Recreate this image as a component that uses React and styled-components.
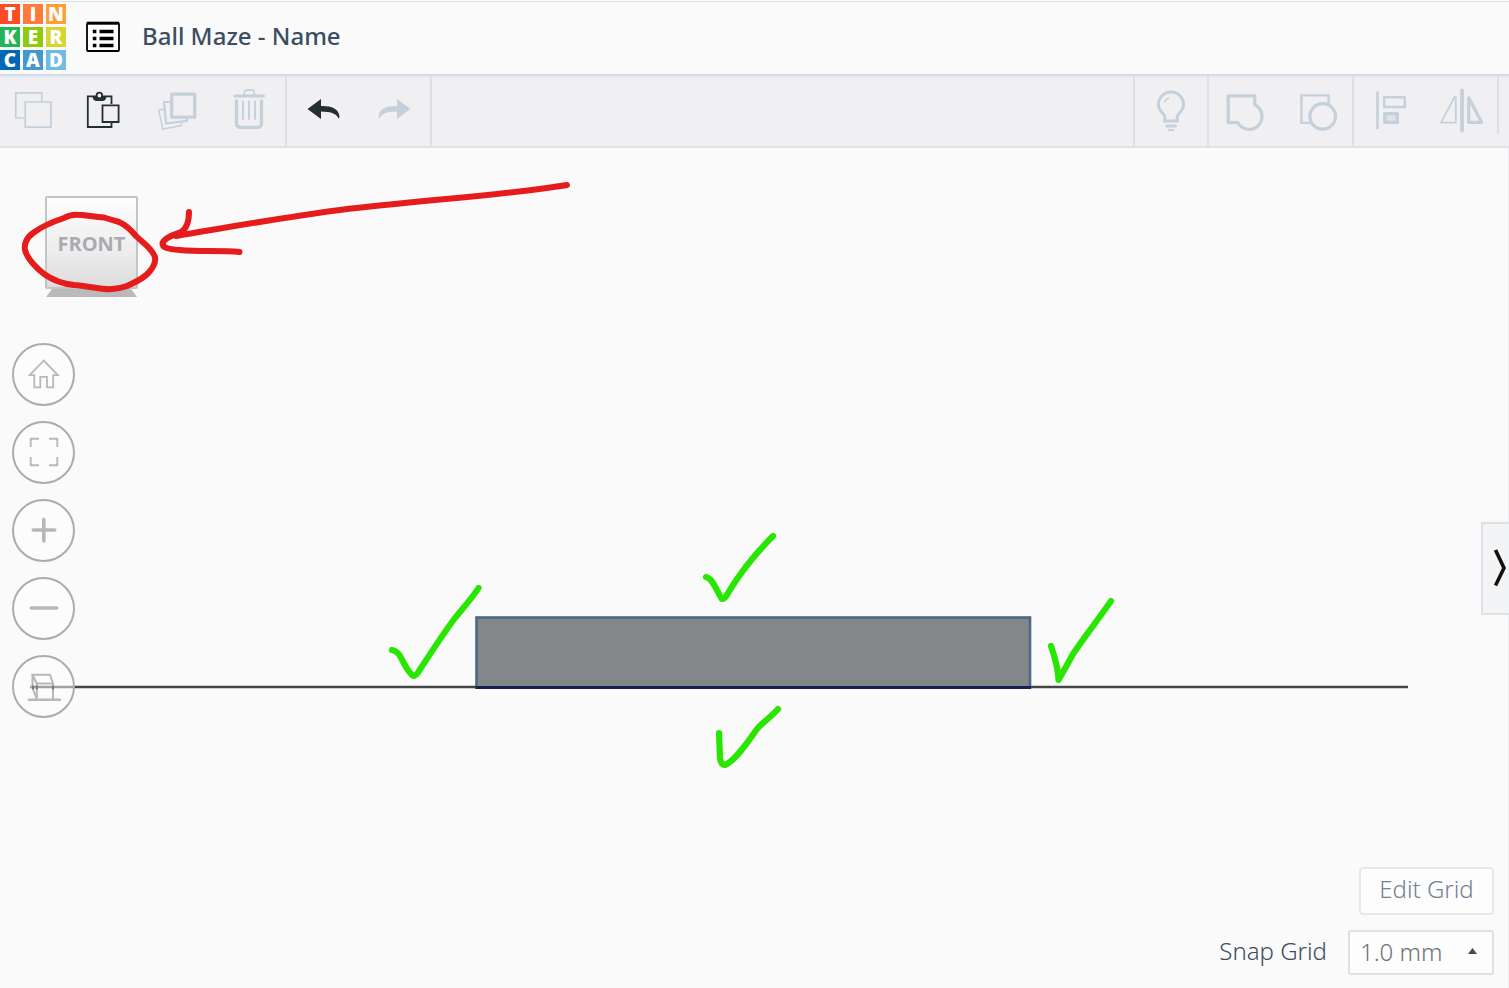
import React, { useState } from "react"
import styled, { createGlobalStyle } from "styled-components"

const GlobalStyle = createGlobalStyle`
  * {
    box-sizing: border-box;
  }

  body {
    margin: 0;
    background: #fafafa;
    font-family: "Noto Sans", "Open Sans", sans-serif;
  }

  button,
  select {
    font-family: inherit;
    cursor: pointer;
  }
`

const Page = styled.div`
  display: flex;
  flex-direction: column;
  min-height: 100vh;
`

const Header = styled.header`
  display: flex;
  align-items: center;
  height: 74px;
  background: #fafafa;
  box-shadow: inset 0 2px 0 -1px #fafafa, inset 0 2px 0 #dcdfe2;
`

const Logo = styled.a`
  display: grid;
  grid-template-columns: repeat(3, 20px);
  grid-auto-rows: 20px;
  gap: 3px;
  text-decoration: none;
`

const Tile = styled.span`
  display: flex;
  align-items: center;
  justify-content: center;
  background: ${({ $color }) => $color};
  color: #fff;
  font-family: "Open Sans", "Noto Sans", sans-serif;
  font-size: 19px;
  font-weight: 800;
  line-height: 20px;
`

const ListButton = styled.button`
  display: flex;
  margin-left: 20px;
  padding: 0;
  border: 0;
  background: transparent;
`

const Title = styled.h1`
  margin: 0 0 0 22px;
  padding-bottom: 2px;
  color: #3a4d63;
  font-size: 24px;
  font-weight: 500;
  line-height: 32px;
`

const Toolbar = styled.div`
  display: flex;
  height: 74px;
  border-top: 2px solid #d6dce5;
  border-bottom: 2px solid #dfe2e6;
  background: linear-gradient(#e2e6ec, #f0f0f3 3px);
`

const ToolGroup = styled.div`
  display: flex;
  padding-left: 1px;
`

const RightTools = styled.div`
  display: flex;
  margin-left: auto;
  padding-right: 10px;
`

const Divider = styled.span`
  width: 2px;
  height: ${({ $short }) => ($short ? "58px" : "70px")};
  background: #dce1e7;
`

const ToolButton = styled.button`
  width: 71px;
  height: 70px;
  padding: 0;
  border: 0;
  background: transparent;
  color: ${({ $active }) => ($active ? "#22302f" : "#c4d0da")};

  svg {
    display: block;
  }
`

const Workspace = styled.main`
  position: relative;
  flex: 1;
  display: flex;
  justify-content: space-between;
  min-height: 640px;
  box-shadow: inset -1px 0 0 #eeeff1;
`

const Scene = styled.svg`
  position: absolute;
  inset: 0;
  width: 100%;
  height: 100%;
`

const Marker = styled.svg`
  position: absolute;
  top: 0;
  left: 0;
  pointer-events: none;
`

const ViewTools = styled.div`
  position: relative;
  padding: 48px 12px 0;
`

const CubeButton = styled.button`
  display: block;
  width: 93px;
  height: 93px;
  margin-left: 33px;
  padding: 2px 0 0;
  border: 2px solid #c4c4c4;
  border-radius: 2px;
  background: linear-gradient(#fdfdfd, #ededed 60%, #dcdcdc);
  color: #a8acb1;
  font-family: "Open Sans", "Noto Sans", sans-serif;
  font-size: 20px;
  font-weight: 700;
`

const CubeShadow = styled.svg`
  display: block;
  margin-left: 33px;
`

const ViewButtons = styled.nav`
  display: flex;
  flex-direction: column;
  gap: 15px;
  margin-top: 46px;
`

const RoundButton = styled.button`
  width: 63px;
  height: 63px;
  padding: 0;
  border: 2px solid #a9adb2;
  border-radius: 50%;
  background: rgba(253, 253, 253, 0.5);
  color: #b8b8b8;

  svg {
    display: block;
  }
`

const SidePanel = styled.div`
  position: relative;
  display: grid;
  grid-template-rows: 1fr auto 1fr;
  justify-items: end;
`

const PanelToggle = styled.button`
  grid-row: 2;
  display: flex;
  align-items: center;
  width: 28px;
  height: 93px;
  padding: 0 0 0 9px;
  border: 2px solid #dde1e7;
  border-right: 0;
  background: #f3f4f6;
`

const GridControls = styled.div`
  grid-row: 3;
  align-self: end;
  display: flex;
  flex-direction: column;
  align-items: flex-end;
  gap: 15px;
  padding: 0 15px 13px 0;
`

const EditGrid = styled.button`
  width: 135px;
  height: 48px;
  padding: 0 0 6px;
  border: 2px solid #e6e8ed;
  border-radius: 4px;
  background: #fdfdfd;
  color: #748291;
  font-size: 24px;
  font-weight: 300;
`

const SnapRow = styled.div`
  display: flex;
  align-items: center;
  gap: 21px;
`

const SnapLabel = styled.label`
  padding-bottom: 4px;
  color: #3a4d63;
  font-size: 24px;
  font-weight: 300;
  line-height: 32px;
`

const SelectBox = styled.div`
  position: relative;
  display: flex;

  svg {
    position: absolute;
    top: 18px;
    right: 17px;
    pointer-events: none;
  }
`

const SnapSelect = styled.select`
  appearance: none;
  width: 146px;
  height: 45px;
  padding: 0 40px 3px 10px;
  border: 2px solid #dde1e7;
  border-radius: 3px;
  background: #fdfdfd;
  color: #6c7377;
  font-size: 24px;
  font-weight: 300;
`

const TILES = [
  ["T", "#ff4a27"],
  ["I", "#ff7b3c"],
  ["N", "#ff9d38"],
  ["K", "#25b558"],
  ["E", "#8fcb0c"],
  ["R", "#d6d531"],
  ["C", "#0267b5"],
  ["A", "#4399cd"],
  ["D", "#70bbdf"],
]

const EDIT_TOOLS = [
  {
    label: "Copy",
    icon: (
      <g strokeWidth="1.7">
        <path d="M23 42H14.8V16.8H40.8V25" />
        <path d="M24.2 26H50V51.2H24.2z" />
      </g>
    ),
  },
  {
    label: "Paste",
    active: true,
    icon: (
      <g strokeWidth="1.8">
        <path d="M39.5 28V20.3H15.8V51H39.5V47" />
        <path d="M30.5 29.3H46.6V46H30.5z" />
        <path
          d="M20.5 20H23.5A4 4 0 0 1 31 20H34.5C34.5 23 33 25 30 25H25C22 25 20.5 23 20.5 20z"
          fill="currentColor"
          stroke="none"
        />
        <circle cx="27.4" cy="19.5" r="2.8" fill="#f0f0f3" />
      </g>
    ),
  },
  {
    label: "Duplicate",
    icon: (
      <g strokeLinejoin="round">
        <path d="M28.7 18.2H51.7V41.2H28.7z" strokeWidth="3.2" />
        <path d="M27 26H21L23 47.5L44 44.8V42.5" strokeWidth="2.2" />
        <path d="M21 33L15.8 34.2L19.8 53.3L38.5 49.5V47" strokeWidth="1.5" />
      </g>
    ),
  },
  {
    label: "Delete",
    icon: (
      <g strokeLinecap="round">
        <path d="M21 20H49.5" strokeWidth="3" />
        <path d="M30.3 19V17Q30.3 13.8 33.5 13.8H37Q40.3 13.8 40.3 17V19" strokeWidth="1.7" />
        <path d="M22.5 25V47Q22.5 51.4 27 51.4H43Q47.5 51.4 47.5 47V25" strokeWidth="3.3" />
        <path d="M29 25.5V43M35 25.5V43M41 25.5V43" strokeWidth="1.9" />
      </g>
    ),
  },
]

const ARROW =
  "M19.5 33L33 23V30C42 29.6 51.5 32 51.5 41.5L50.7 42.5C48 37 42 35.7 33 35.5V43z"

const HISTORY_TOOLS = [
  {
    label: "Undo",
    active: true,
    icon: <path d={ARROW} fill="currentColor" stroke="none" />,
  },
  {
    label: "Redo",
    icon: (
      <path d={ARROW} fill="currentColor" stroke="none" transform="matrix(-1 0 0 1 71 0)" />
    ),
  },
]

const SHOW_TOOLS = [
  {
    label: "Show all",
    icon: (
      <g strokeLinecap="round">
        <path
          d="M28.8 45V41C28.5 37.5 22.4 35 22.4 28.7A12.6 12.6 0 0 1 47.6 28.7C47.6 35 41.5 37.5 41.2 41V45z"
          strokeWidth="3"
        />
        <path d="M28.6 26Q29.5 23 32.5 22.2" strokeWidth="1.4" />
        <path d="M31 50H39.3" strokeWidth="3" />
        <path d="M32.7 54H37.3" strokeWidth="2" />
      </g>
    ),
  },
]

const GROUP_TOOLS = [
  {
    label: "Group",
    icon: (
      <path
        d="M44.8 28.7V19.8H18.2V46.6H27.6A13 13 0 1 0 44.8 28.7z"
        strokeWidth="3.2"
        strokeLinejoin="round"
      />
    ),
  },
  {
    label: "Ungroup",
    icon: (
      <g strokeLinejoin="round">
        <path d="M30 46.9H20.4V19.4H47.6V28" strokeWidth="2.4" />
        <circle cx="41.7" cy="40.4" r="12.8" strokeWidth="3.2" />
      </g>
    ),
  },
]

const ALIGN_TOOLS = [
  {
    label: "Align",
    icon: (
      <g strokeLinejoin="round">
        <path d="M22.5 15.5V53" strokeWidth="2.7" />
        <path d="M29.2 21.2H49.8V31H29.2z" strokeWidth="2.4" />
        <path d="M29.8 37.6H42.3V46.4H29.8z" strokeWidth="3.4" fill="#dde3e9" />
      </g>
    ),
  },
  {
    label: "Mirror",
    icon: (
      <g strokeLinejoin="round" strokeLinecap="round">
        <path d="M36 14.5V54.5" strokeWidth="3.8" />
        <path d="M15 46.7L28.5 21.2H29.8V46.7z" strokeWidth="1.8" />
        <path d="M42.7 21.8V46.3H55.6z" strokeWidth="3.2" />
      </g>
    ),
  },
]

const VIEW_TOOLS = [
  {
    label: "Home view",
    icon: (
      <path
        d="M15.7 30.2L29.7 15.5L44 30.2H39.2V42.3H33V31.8H26.3V42.3H20.3V30.2z"
        strokeWidth="1.8"
      />
    ),
  },
  {
    label: "Fit all in view",
    icon: (
      <path
        d="M16.7 24V15.7H25M35 15.7H43.3V24M43.3 34V42.3H35M25 42.3H16.7V34"
        strokeWidth="1.9"
      />
    ),
  },
  {
    label: "Zoom in",
    icon: <path d="M19.3 29H40.7M29.8 18.5V40" strokeWidth="3.6" strokeLinecap="round" />,
  },
  {
    label: "Zoom out",
    icon: <path d="M17.5 29H42.5" strokeWidth="3.7" strokeLinecap="round" />,
  },
  {
    label: "Switch to flat view",
    icon: (
      <g strokeWidth="2" strokeLinecap="round">
        <path d="M14.8 42.7H46" strokeWidth="2.4" />
        <path d="M22.8 42V26.5H39V42M22.8 26.5L18.5 17.7H36L39 26.5M18.5 17.7V31L22.8 42" />
        <path d="M19 28.5V32.500M22.8 28.5V32.500M39 28.5V32.500" stroke="#77777a" strokeLinecap="butt" />
      </g>
    ),
  },
]

const Tools = ({ items }) => (
  <ToolGroup>
    {items.map(({ label, active, icon }) => (
      <ToolButton key={label} $active={active} aria-label={label}>
        <svg width="71" height="70" viewBox="0 0 71 70" fill="none" stroke="currentColor">
          {icon}
        </svg>
      </ToolButton>
    ))}
  </ToolGroup>
)

const App = () => {
  const [snap, setSnap] = useState("1.0 mm")

  return (
    <>
      <GlobalStyle />
      <Page>
        <Header>
          <Logo href="#" aria-label="Tinkercad">
            {TILES.map(([letter, color]) => (
              <Tile key={letter} $color={color}>
                {letter}
              </Tile>
            ))}
          </Logo>
          <ListButton aria-label="My designs">
            <svg width="34" height="32" viewBox="0 0 34 32">
              <rect x="1" y="2" width="32" height="28" rx="1" fill="#fff" stroke="#000" strokeWidth="1.8" />
              <path d="M1 2.2H33" stroke="#000" strokeWidth="3" />
              <path
                d="M6.8 10.5h3.6M6.8 17.5h3.6M6.8 24.5h3.6M13.5 10.5h14M13.5 17.5h14M13.5 24.5h14"
                stroke="#000"
                strokeWidth="3.4"
              />
            </svg>
          </ListButton>
          <Title>Ball Maze - Name</Title>
        </Header>

        <Toolbar>
          <Tools items={EDIT_TOOLS} />
          <Divider />
          <Tools items={HISTORY_TOOLS} />
          <Divider />
          <RightTools>
            <Divider />
            <Tools items={SHOW_TOOLS} />
            <Divider />
            <Tools items={GROUP_TOOLS} />
            <Divider />
            <Tools items={ALIGN_TOOLS} />
            <Divider $short />
          </RightTools>
        </Toolbar>

        <Workspace>
          <Scene viewBox="0 0 1509 840" fill="none">
            {/* workplane seen edge-on, with the box standing on it */}
            <path d="M30 539H1408" stroke="#454547" strokeWidth="2.4" />
            <rect x="476.5" y="469.5" width="553.5" height="70" fill="#838789" stroke="#4d6785" strokeWidth="2.6" />
            <path d="M475.5 539.5H1031" stroke="#17204f" strokeWidth="3.2" />
            <g stroke="#28e600" strokeWidth="6.2" strokeLinecap="round" strokeLinejoin="round">
              <path d="M392 502Q397 503 400 508C404 515 408 525 413.5 528Q416 528 419 523C430 506 443 486 455 470C464 459 473 449 478.5 440" />
              <path d="M706 429C713 430 718 446 722 451Q725 451 728 445C740 425 758 403 773 388" />
              <path d="M719 585L720 610Q721 617 725 617C735 613 748 594 757 581C763 574 770 570 778 561" />
              <path d="M1051 498Q1058 518 1058.5 532Q1066 519 1073 506C1083 491 1097 473 1111 453" />
            </g>
          </Scene>

          <ViewTools>
            <CubeButton>FRONT</CubeButton>
            <CubeShadow width="93" height="8" viewBox="0 0 93 8">
              <path d="M7 0H86L92 8H1z" fill="#bababa" />
            </CubeShadow>
            <ViewButtons>
              {VIEW_TOOLS.map(({ label, icon }) => (
                <RoundButton key={label} aria-label={label}>
                  <svg width="59" height="59" viewBox="0 0 59 59" fill="none" stroke="currentColor">
                    {icon}
                  </svg>
                </RoundButton>
              ))}
            </ViewButtons>
            <Marker
              width="600"
              height="200"
              viewBox="0 0 600 200"
              fill="none"
              stroke="#e61c1c"
              strokeWidth="6"
              strokeLinecap="round"
              strokeLinejoin="round"
            >
              <path d="M104 69.5C94 69 85 66.7 77 66.7Q70 66.5 64 70C52 74 41 79 33 85C26 90 24 97 25 102C27 110 34 118 44 126C54 133 64 136 74 137C88 138 98 141 110 141.3Q119 141 127 138C136 134 146 129 150 123Q156 116 155 109C152 100 143 95 136 88C131 82 126 77 119 74Q112 72 104 69.5" />
              <path d="M567 37C500 48 420 52 340 62C285 69 230 79 176 88" />
              <path d="M189 64C189 75 186 81 181 84C174 87 165 89 162.5 95C162 100 168 101 180 102C200 104 220 102 239.5 104" />
            </Marker>
          </ViewTools>

          <SidePanel>
            <PanelToggle aria-label="Toggle shapes panel">
              <svg width="16" height="42" viewBox="0 0 16 42" fill="none">
                <path d="M3.5 3L12 21L3.5 38.5" stroke="#111" strokeWidth="3.6" />
              </svg>
            </PanelToggle>
            <GridControls>
              <EditGrid>Edit Grid</EditGrid>
              <SnapRow>
                <SnapLabel htmlFor="snap">Snap Grid</SnapLabel>
                <SelectBox>
                  <SnapSelect id="snap" value={snap} onChange={(e) => setSnap(e.target.value)}>
                    <option>0.1 mm</option>
                    <option>0.5 mm</option>
                    <option>1.0 mm</option>
                    <option>2.0 mm</option>
                  </SnapSelect>
                  <svg width="9" height="6" viewBox="0 0 9 6">
                    <path d="M4.5 0L9 6H0z" fill="#444b50" />
                  </svg>
                </SelectBox>
              </SnapRow>
            </GridControls>
          </SidePanel>
        </Workspace>
      </Page>
    </>
  )
}

export default App
